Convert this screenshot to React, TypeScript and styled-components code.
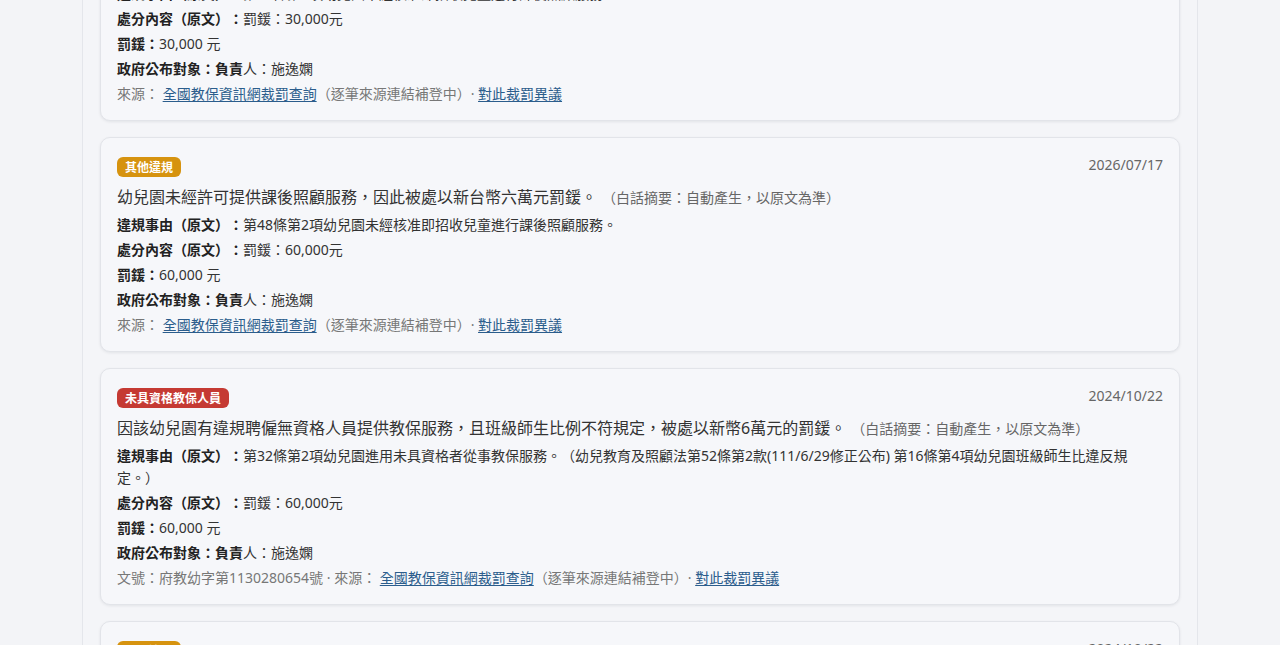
import React from "react";
import styled, { createGlobalStyle } from "styled-components";

const GlobalStyle = createGlobalStyle`
  html, body {
    margin: 0;
    padding: 0;
    background: #f3f4f7;
  }
  body {
    font-family: "Noto Sans", "Noto Sans CJK TC", sans-serif;
    color: #333;
    text-spacing-trim: space-all;
    -webkit-font-smoothing: antialiased;
  }
  * {
    box-sizing: border-box;
  }
`;

const Page = styled.main`
  width: 1116px;
  min-height: 100vh;
  margin: 0 auto;
  padding: 0 17px 40px;
  background: #f4f5f8;
  border-left: 1px solid #e4e6eb;
  border-right: 1px solid #e4e6eb;
  overflow: hidden;
`;

/* the list is scrolled: first card starts above the viewport */
const List = styled.section`
  display: flex;
  flex-direction: column;
  gap: 16px;
  margin-top: -94px;
`;

const Card = styled.article`
  background: #f6f7fa;
  border: 1px solid #e2e4e9;
  border-radius: 10px;
  box-shadow: 0 1px 3px rgba(15, 23, 42, 0.08);
  padding: 19px 16px 15px;
`;

const Header = styled.header`
  display: flex;
  align-items: center;
  justify-content: space-between;
  height: 20px;
`;

const Badge = styled.span<{ $tone: "amber" | "red" }>`
  display: inline-flex;
  align-items: center;
  height: 20px;
  padding: 0 8px;
  border-radius: 6px;
  font-size: 12px;
  font-weight: 700;
  color: #fff;
  background: ${({ $tone }) => ($tone === "red" ? "#c53a33" : "#d6930f")};
`;

const DateText = styled.time`
  font-size: 14px;
  color: #666;
  margin-top: -5px;
`;

const Title = styled.p`
  margin: 7px 0 0;
  font-size: 16px;
  line-height: 26px;
  color: #333;
`;

const Note = styled.span`
  margin-left: 5px;
  font-size: 14px;
  color: #666;
`;

const Row = styled.p`
  margin: 3px 0 0;
  font-size: 14px;
  line-height: 22px;
  color: #333;
`;

const Label = styled.strong`
  font-weight: 700;
  color: #222;
`;

const Footer = styled(Row)`
  color: #777;
`;

const Link = styled.a`
  color: #2b5d8c;
  text-decoration: underline;
  text-underline-offset: 2px;
`;

type Item = {
  tag: string;
  tone: "amber" | "red";
  date: string;
  title: string;
  reason: string;
  penalty: string;
  fine: string;
  docNo?: string;
};

const items: Item[] = [
  {
    tag: "其他違規",
    tone: "amber",
    date: "2026/07/17",
    title: "幼兒園未依規定辦理，因此被處以新台幣三萬元罰鍰。",
    reason: "第48條第2項幼兒園未經核准即招收兒童進行課後照顧服務。",
    penalty: "罰鍰：30,000元",
    fine: "30,000 元",
  },
  {
    tag: "其他違規",
    tone: "amber",
    date: "2026/07/17",
    title: "幼兒園未經許可提供課後照顧服務，因此被處以新台幣六萬元罰鍰。",
    reason: "第48條第2項幼兒園未經核准即招收兒童進行課後照顧服務。",
    penalty: "罰鍰：60,000元",
    fine: "60,000 元",
  },
  {
    tag: "未具資格教保人員",
    tone: "red",
    date: "2024/10/22",
    title:
      "因該幼兒園有違規聘僱無資格人員提供教保服務，且班級師生比例不符規定，被處以新幣6萬元的罰鍰。",
    reason:
      "第32條第2項幼兒園進用未具資格者從事教保服務。（幼兒教育及照顧法第52條第2款(111/6/29修正公布) 第16條第4項幼兒園班級師生比違反規定。）",
    penalty: "罰鍰：60,000元",
    fine: "60,000 元",
    docNo: "府教幼字第1130280654號",
  },
  {
    tag: "其他違規",
    tone: "amber",
    date: "2024/10/22",
    title: "幼兒園未依規定辦理，被處以新台幣罰鍰。",
    reason: "第48條第2項幼兒園未經核准即招收兒童進行課後照顧服務。",
    penalty: "罰鍰：60,000元",
    fine: "60,000 元",
  },
];

const ViolationCard = ({ item }: { item: Item }) => (
  <Card>
    <Header>
      <Badge $tone={item.tone}>{item.tag}</Badge>
      <DateText>{item.date}</DateText>
    </Header>
    <Title>
      {item.title}
      <Note>（白話摘要：自動產生，以原文為準）</Note>
    </Title>
    <Row>
      <Label>違規事由（原文）：</Label>
      {item.reason}
    </Row>
    <Row>
      <Label>處分內容（原文）：</Label>
      {item.penalty}
    </Row>
    <Row>
      <Label>罰鍰：</Label>
      {item.fine}
    </Row>
    <Row>
      <Label>政府公布對象：負責</Label>人：施逸嫻
    </Row>
    <Footer>
      {item.docNo && <>文號：{item.docNo} · </>}
      來源： <Link href="#">全國教保資訊網裁罰查詢</Link>（逐筆來源連結補登中）·{" "}
      <Link href="#">對此裁罰異議</Link>
    </Footer>
  </Card>
);

export default function App() {
  return (
    <>
      <GlobalStyle />
      <Page>
        <List>
          {items.map((item, i) => (
            <ViolationCard key={i} item={item} />
          ))}
        </List>
      </Page>
    </>
  );
}
